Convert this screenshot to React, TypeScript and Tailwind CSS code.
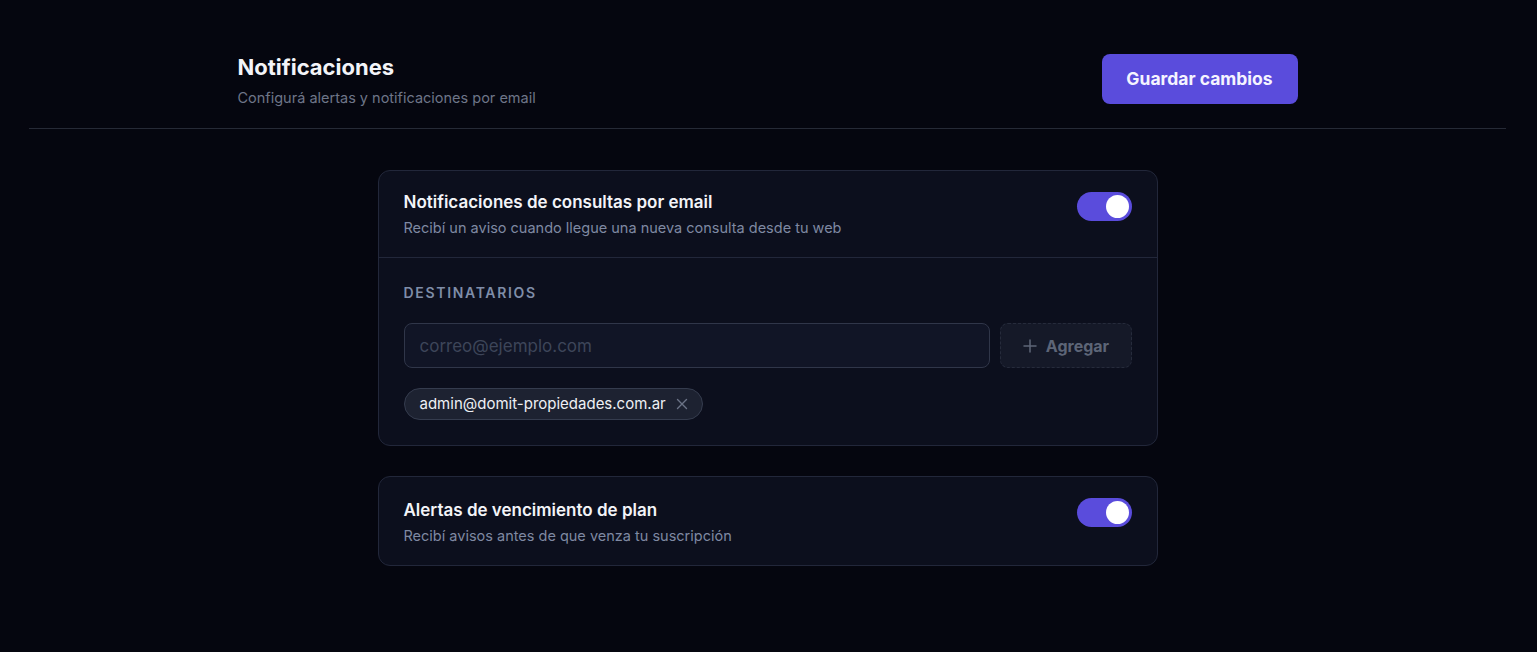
import React from "react";

function Toggle({ className = "" }: { className?: string }) {
  return (
    <div
      className={`flex h-[29px] w-[55px] shrink-0 items-center justify-end rounded-full bg-[#5a4cdc] px-[3px] ${className}`}
    >
      <div className="h-[23px] w-[23px] rounded-full bg-white" />
    </div>
  );
}

export default function App() {
  return (
    <div
      className="min-h-[652px] w-full bg-[#05060f] pl-[29px] pr-[31px] text-white"
      style={{ fontFamily: "Inter, 'Noto Sans', sans-serif" }}
    >
      <div className="pt-[54px]">
        <div className="border-b border-[#262a36] pb-[20px]">
          <div className="mx-auto flex w-[1060px] items-start justify-between">
            <div>
              <h1 className="text-[22px] font-bold leading-[26px] text-[#f3f4f8]">Notificaciones</h1>
              <p className="mt-[8px] text-[14.5px] leading-[20px] text-[#6e7588]">
                Configurá alertas y notificaciones por email
              </p>
            </div>
            <button className="h-[50px] w-[196px] rounded-[8px] bg-[#5a4cdc] text-[17.5px] font-bold text-[#f5f4ff]">
              Guardar cambios
            </button>
          </div>
        </div>
      </div>

      <div className="mx-auto mt-[41px] flex w-[780px] flex-col gap-[30px]">
        <div className="rounded-[12px] border border-[#22273a] bg-[#0c0f1d]">
          <div className="flex items-start justify-between border-b border-[#22273a] px-[25px] pb-[19px] pt-[19px]">
            <div>
              <div className="text-[17px] font-semibold leading-[24px] text-[#f3f4f8]">
                Notificaciones de consultas por email
              </div>
              <div className="mt-[4px] text-[14.5px] leading-[20px] text-[#7f89a2]">
                Recibí un aviso cuando llegue una nueva consulta desde tu web
              </div>
            </div>
            <Toggle className="mt-[2px]" />
          </div>
          <div className="px-[25px] pb-[25px] pt-[26px]">
            <div className="text-[14px] font-semibold leading-[18px] tracking-[0.12em] text-[#7f8da8]">
              DESTINATARIOS
            </div>
            <div className="mt-[21px] flex gap-[10px]">
              <input
                placeholder="correo@ejemplo.com"
                className="h-[45px] flex-1 rounded-[8px] border border-[#303649] bg-[#111526] px-[15px] text-[17px] text-white outline-none placeholder:text-[#3d4559]"
              />
              <button className="flex h-[45px] w-[132px] items-center justify-center gap-[8px] rounded-[8px] border border-dashed border-[#262b3b] bg-[#151928] text-[16px] font-bold text-[#5d6577]">
                <svg width="16" height="16" viewBox="0 0 16 16" fill="none" stroke="currentColor" strokeWidth="1.5" strokeLinecap="round">
                  <path d="M8 2v12M2 8h12" />
                </svg>
                Agregar
              </button>
            </div>
            <div className="mt-[20px] flex">
              <div className="flex h-[32px] items-center gap-[10px] rounded-full border border-[#353c4e] bg-[#1d2231] pl-[15px] pr-[14px]">
                <span className="text-[15px] text-[#eef0f5]">admin@domit-propiedades.com.ar</span>
                <svg width="12" height="12" viewBox="0 0 12 12" fill="none" stroke="#6b7386" strokeWidth="1.4" strokeLinecap="round">
                  <path d="M1.5 1.5l9 9M10.5 1.5l-9 9" />
                </svg>
              </div>
            </div>
          </div>
        </div>

        <div className="rounded-[12px] border border-[#22273a] bg-[#0c0f1d]">
          <div className="flex items-start justify-between px-[25px] pb-[19px] pt-[21px]">
            <div>
              <div className="text-[17px] font-semibold leading-[24px] text-[#f3f4f8]">
                Alertas de vencimiento de plan
              </div>
              <div className="mt-[4px] text-[14.5px] leading-[20px] text-[#7f89a2]">
                Recibí avisos antes de que venza tu suscripción
              </div>
            </div>
            <Toggle />
          </div>
        </div>
      </div>
    </div>
  );
}
